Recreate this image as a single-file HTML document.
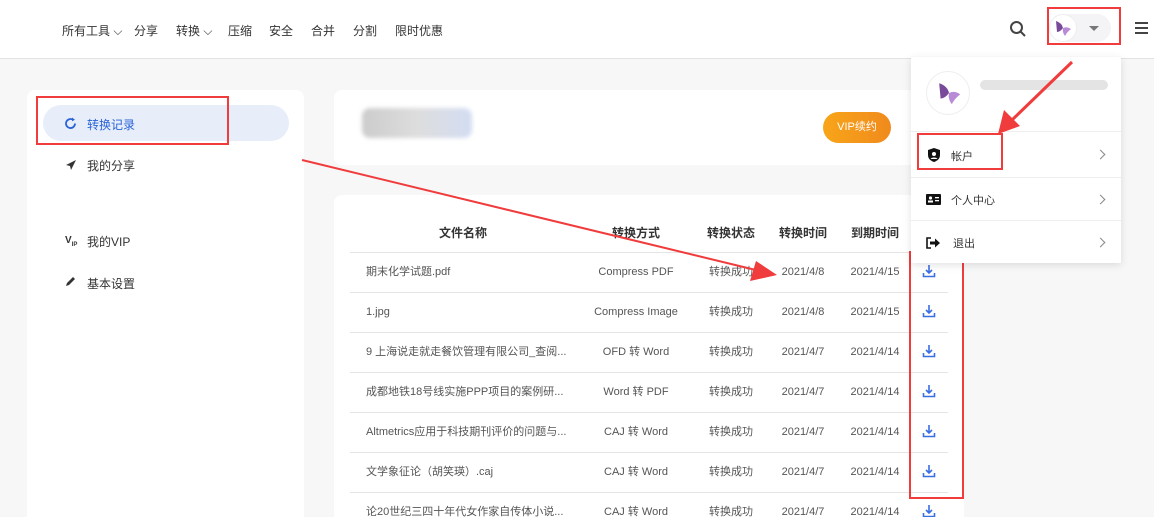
<!DOCTYPE html>
<html style="overflow:hidden;width:1154px;height:517px"><head><meta charset="utf-8"><style>
*{margin:0;padding:0;box-sizing:border-box}
body{width:1154px;height:517px;overflow:hidden;background:#f7f7f7;font-family:"Liberation Sans","Noto Sans CJK SC",sans-serif;position:relative;color:#333}
.hdr{position:absolute;left:0;top:0;width:1154px;height:59px;background:#fff;border-bottom:1px solid #e2e2e2}
.nav{position:absolute;top:22px;font-size:12px;color:#333}
.abs{position:absolute}
.card{position:absolute;background:#fff;border-radius:8px}
.mi{position:absolute;left:87px;font-size:12px;color:#333}
.th{position:absolute;top:224px;font-size:12px;font-weight:bold;color:#333;transform:translateX(-50%);white-space:nowrap}
.row{position:absolute;left:350px;width:598px;height:40px;border-top:1px solid #e5e5e5;font-size:11px;color:#555}
.row span{position:absolute;top:0;line-height:38px;height:38px;white-space:nowrap}
.c{transform:translateX(-50%)}
.red{position:absolute;border:2px solid #f03c3c}
.dd{position:absolute;left:911px;top:57px;width:210px;height:206px;background:#fff;box-shadow:0 2px 8px rgba(0,0,0,.12)}
.ddi{position:absolute;left:0;width:210px;border-top:1px solid #eee;font-size:11px;color:#333}
.chev{position:absolute;left:186px;width:7px;height:7px;border-right:1.3px solid #888;border-top:1.3px solid #888;transform:rotate(45deg)}
</style></head><body>
<div class="hdr">
 <span class="nav" style="left:62px">所有工具 ⌵</span>
 <span class="nav" style="left:134px">分享</span>
 <span class="nav" style="left:176px">转换 ⌵</span>
 <span class="nav" style="left:228px">压缩</span>
 <span class="nav" style="left:269px">安全</span>
 <span class="nav" style="left:311px">合并</span>
 <span class="nav" style="left:353px">分割</span>
 <span class="nav" style="left:395px">限时优惠</span>
 <svg class="abs" style="left:1009px;top:20px" width="18" height="18" viewBox="0 0 18 18"><circle cx="7.5" cy="7.5" r="5.5" fill="none" stroke="#444" stroke-width="2"/><path d="M11.5 11.5l4.5 4.5" stroke="#444" stroke-width="2"/></svg>
 <div class="abs" style="left:1049px;top:14px;width:62px;height:28px;border-radius:14px;background:#f4f4f6"></div>
 <div class="abs" style="left:1049px;top:14px;width:28px;height:28px;border-radius:50%;background:#fff;border:1px solid #eee"></div>
 <svg class="abs" style="left:1053px;top:18px" width="20" height="20" viewBox="0 0 20 20"><path d="M3 3 Q9 5 10 10 Q7 14 4 14 Z" fill="#7a4a9a"/><path d="M10 10 Q14 8 18 11 Q14 14 12 18 Q9 14 10 10Z" fill="#b98ad6"/></svg>
 <div class="abs" style="left:1089px;top:26px;border:5px solid transparent;border-top:5px solid #777"></div>
 <div class="abs" style="left:1135px;top:22px;width:13px;height:2px;background:#444;box-shadow:0 5px 0 #444,0 10px 0 #444"></div>
</div>
<div class="red" style="left:1047px;top:7px;width:74px;height:38px"></div>

<div class="card" style="left:27px;top:90px;width:277px;height:427px;border-radius:8px 8px 0 0"></div>
<div class="abs" style="left:43px;top:105px;width:246px;height:36px;border-radius:18px;background:#e7eefa"></div>
<svg class="abs" style="left:64px;top:117px" width="13" height="13" viewBox="0 0 13 13"><path d="M11 6.5A4.5 4.5 0 1 1 9 2.8" fill="none" stroke="#2a62d8" stroke-width="1.8"/><path d="M8 0.5l3 2.3-3 1.5z" fill="#2a62d8"/></svg>
<span class="mi" style="top:116px;color:#2a62d8">转换记录</span>
<div class="red" style="left:36px;top:96px;width:193px;height:49px"></div>
<svg class="abs" style="left:65px;top:159px" width="12" height="12" viewBox="0 0 12 12"><path d="M11 1L1 6l4 1 1 4z" fill="#333"/></svg>
<span class="mi" style="top:157px">我的分享</span>
<span class="abs" style="left:65px;top:235px;font-size:10px;font-weight:bold;color:#333">V<sub style="font-size:6px">IP</sub></span>
<span class="mi" style="top:233px">我的VIP</span>
<svg class="abs" style="left:65px;top:276px" width="11" height="11" viewBox="0 0 11 11"><path d="M1 10l1-3 6-6 2 2-6 6z" fill="#333"/></svg>
<span class="mi" style="top:275px">基本设置</span>

<div class="card" style="left:334px;top:90px;width:630px;height:75px"></div>
<div class="abs" style="left:362px;top:108px;width:110px;height:30px;border-radius:8px;background:linear-gradient(90deg,#ccc,#ddd 50%,#d3ddf2);filter:blur(2px)"></div>
<div class="abs" style="left:823px;top:112px;width:68px;height:31px;border-radius:16px;background:linear-gradient(90deg,#f8a51a,#f08a1c);color:#fff;font-size:11px;text-align:center;line-height:31px">VIP续约</div>

<div class="card" style="left:334px;top:195px;width:630px;height:322px;border-radius:8px 8px 0 0"></div>
<span class="th" style="left:463px">文件名称</span>
<span class="th" style="left:636px">转换方式</span>
<span class="th" style="left:731px">转换状态</span>
<span class="th" style="left:803px">转换时间</span>
<span class="th" style="left:875px">到期时间</span>

<div class="row" style="top:252px"><span style="left:16px">期末化学试题.pdf</span><span class="c" style="left:286px">Compress PDF</span><span class="c" style="left:381px">转换成功</span><span class="c" style="left:453px">2021/4/8</span><span class="c" style="left:525px">2021/4/15</span></div>
<div class="row" style="top:292px"><span style="left:16px">1.jpg</span><span class="c" style="left:286px">Compress Image</span><span class="c" style="left:381px">转换成功</span><span class="c" style="left:453px">2021/4/8</span><span class="c" style="left:525px">2021/4/15</span></div>
<div class="row" style="top:332px"><span style="left:16px">9 上海说走就走餐饮管理有限公司_查阅...</span><span class="c" style="left:286px">OFD 转 Word</span><span class="c" style="left:381px">转换成功</span><span class="c" style="left:453px">2021/4/7</span><span class="c" style="left:525px">2021/4/14</span></div>
<div class="row" style="top:372px"><span style="left:16px">成都地铁18号线实施PPP项目的案例研...</span><span class="c" style="left:286px">Word 转 PDF</span><span class="c" style="left:381px">转换成功</span><span class="c" style="left:453px">2021/4/7</span><span class="c" style="left:525px">2021/4/14</span></div>
<div class="row" style="top:412px"><span style="left:16px">Altmetrics应用于科技期刊评价的问题与...</span><span class="c" style="left:286px">CAJ 转 Word</span><span class="c" style="left:381px">转换成功</span><span class="c" style="left:453px">2021/4/7</span><span class="c" style="left:525px">2021/4/14</span></div>
<div class="row" style="top:452px"><span style="left:16px">文学象征论（胡笑瑛）.caj</span><span class="c" style="left:286px">CAJ 转 Word</span><span class="c" style="left:381px">转换成功</span><span class="c" style="left:453px">2021/4/7</span><span class="c" style="left:525px">2021/4/14</span></div>
<div class="row" style="top:492px"><span style="left:16px">论20世纪三四十年代女作家自传体小说...</span><span class="c" style="left:286px">CAJ 转 Word</span><span class="c" style="left:381px">转换成功</span><span class="c" style="left:453px">2021/4/7</span><span class="c" style="left:525px">2021/4/14</span></div>

<svg class="abs" style="left:922px;top:264px" width="14" height="253" viewBox="0 0 14 253">
<g fill="none" stroke="#3a6fe0" stroke-width="1.6">
<path d="M7 1v8M4 6l3 3 3-3M1.5 9v3.5h11V9"/>
<path d="M7 41v8M4 46l3 3 3-3M1.5 49v3.5h11V49"/>
<path d="M7 81v8M4 86l3 3 3-3M1.5 89v3.5h11V89"/>
<path d="M7 121v8M4 126l3 3 3-3M1.5 129v3.5h11V129"/>
<path d="M7 161v8M4 166l3 3 3-3M1.5 169v3.5h11V169"/>
<path d="M7 201v8M4 206l3 3 3-3M1.5 209v3.5h11V209"/>
<path d="M7 241v8M4 246l3 3 3-3M1.5 249v3.5h11V249"/>
</g></svg>
<div class="red" style="left:909px;top:251px;width:55px;height:248px"></div>

<div class="dd">
 <div class="abs" style="left:15px;top:14px;width:44px;height:44px;border-radius:50%;border:1px solid #eee"></div>
 <svg class="abs" style="left:24px;top:22px" width="28" height="28" viewBox="0 0 20 20"><path d="M3 3 Q9 5 10 10 Q7 14 4 14 Z" fill="#7a4a9a"/><path d="M10 10 Q14 8 18 11 Q14 14 12 18 Q9 14 10 10Z" fill="#b98ad6"/></svg>
 <div class="abs" style="left:69px;top:23px;width:128px;height:10px;border-radius:5px;background:#e4e4e4"></div>
 <div class="ddi" style="top:74px;height:46px"><svg class="abs" style="left:17px;top:16px" width="12" height="14" viewBox="0 0 12 14"><path d="M6 0L12 2v5c0 4-3 6-6 7-3-1-6-3-6-7V2z" fill="#111"/><circle cx="6" cy="6" r="2" fill="#fff"/><path d="M2.5 11c1-2 6-2 7 0" fill="#fff"/></svg><span class="abs" style="left:40px;top:16px">帐户</span><div class="chev" style="top:19px"></div></div>
 <div class="ddi" style="top:120px;height:43px"><svg class="abs" style="left:15px;top:16px" width="15" height="11" viewBox="0 0 15 11"><rect width="15" height="11" rx="1" fill="#111"/><circle cx="4.5" cy="4" r="1.6" fill="#fff"/><rect x="2" y="6.5" width="5" height="2" fill="#fff"/><rect x="9" y="3" width="4" height="1.3" fill="#fff"/><rect x="9" y="6" width="4" height="1.3" fill="#fff"/></svg><span class="abs" style="left:40px;top:14px">个人中心</span><div class="chev" style="top:18px"></div></div>
 <div class="ddi" style="top:163px;height:43px"><svg class="abs" style="left:15px;top:16px" width="15" height="12" viewBox="0 0 15 12"><path d="M5 1H1v10h4" fill="none" stroke="#111" stroke-width="1.6"/><path d="M4 4.5h5V1.5l5 4.5-5 4.5V7.5H4z" fill="#111"/></svg><span class="abs" style="left:42px;top:14px">退出</span><div class="chev" style="top:18px"></div></div>
</div>
<div class="red" style="left:917px;top:133px;width:86px;height:37px"></div>

<svg class="abs" style="left:0;top:0" width="1154" height="517">
<line x1="302" y1="160" x2="760" y2="271" stroke="#f03c3c" stroke-width="2"/>
<path d="M777 275 L750 281 L756 261 Z" fill="#f03c3c"/>
<line x1="1072" y1="62" x2="1012" y2="120" stroke="#f03c3c" stroke-width="3"/>
<path d="M998 134 L1004 110 L1020 126 Z" fill="#f03c3c"/>
</svg>
</body></html>
